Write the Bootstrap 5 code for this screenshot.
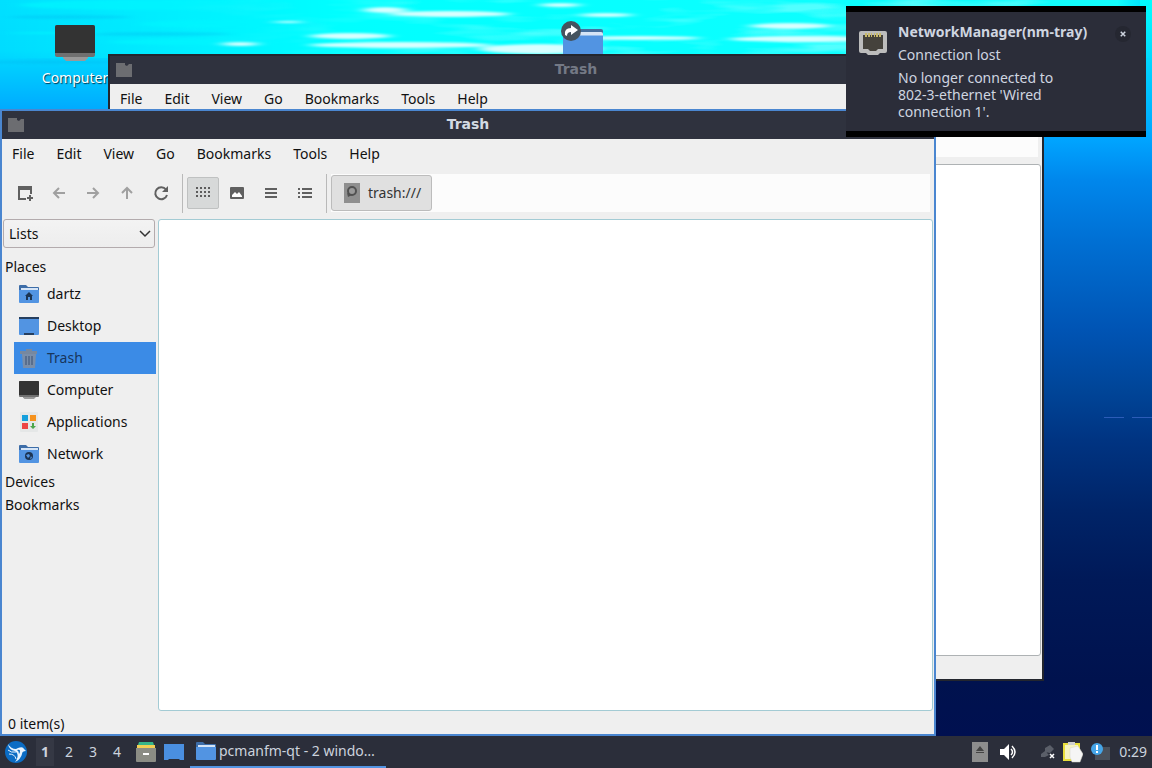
<!DOCTYPE html>
<html lang="en">
<head>
<meta charset="utf-8">
<meta name="viewport" content="width=device-width, initial-scale=1">
<title>Trash</title>
<link href="https://cdn.jsdelivr.net/npm/bootstrap@5.3.0/dist/css/bootstrap.min.css" rel="stylesheet">
<style>
  :root { --frame: #2f323e; --panel: #2b2e3a; --face: #efefef; --accent: #4a86d0; }
  body { font-family: "Noto Sans", "Open Sans", sans-serif; font-size: 14px; line-height: 20px; color: #111; }
  button, select { font: inherit; color: inherit; }
  a { color: inherit; text-decoration: none; }
  svg { display: block; flex: none; }
  .workspace { background: linear-gradient(180deg, #0ff 0, #00f4ff 20px, #00d4ff 65px, #00a4ff 140px, #0087ec 180px, #0070d4 240px, #0054b4 330px, #004598 390px, #003482 440px, #002468 510px, #001958 580px, #00124e 680px, #001050 100%); }
  .sky { height: 112px; }
  .dash { right: 0; top: 417px; width: 48px; height: 1px; background: repeating-linear-gradient(90deg, #2c5cb8 0 20px, transparent 20px 28px); }
  .shortcut { color: #fff; text-shadow: 1px 1px 1px #003a50; width: 80px; }
  .shortcut-computer { left: 35px; top: 24px; gap: 6px; }
  .shortcut-folder { left: 542px; top: 20px; }
  .win { width: 81.25%; background: var(--face); border: 2px solid #23262e; }
  .win-back { left: 108px; top: 54px; bottom: 55px; }
  .win-front { left: 0; top: 109px; bottom: 0; border-color: var(--accent); }
  .titlebar { height: 28px; background: var(--frame); color: #d3dae3; padding: 0 6px; }
  .titlebar h2 { font: bold 14px/26px "DejaVu Sans", sans-serif; margin: 0; height: 28px; }
  .win-back .titlebar { color: #747985; }
  .menus { height: 30px; padding-left: 10px; gap: 22px; }
  .menus button, .tool, .crumb, .pager button, .launch, .tray button, .shut { border: 0; background: none; padding: 0; }
  .tools { height: 50px; padding: 2px 4px 4px 7px; }
  .tool-set { gap: 2px; }
  .tool { width: 32px; height: 32px; display: grid; place-items: center; color: #606060; border-radius: 2px; }
  .tool:disabled { color: #a0a0a0; }
  .tool.active { background: #d7d9d9; border: 1px solid #bfc1c1; }
  .rule { width: 1px; height: 39px; background: #b9b9b9; margin: 0 4px 0 5px; }
  .pathbar { height: 38px; background: #fcfcfc; }
  .crumb { height: 36px; background: #e0e0e0; border: 1px solid #bcbcbc; border-radius: 3px; padding: 0 10px 0 12px; color: #333; }
  .sidebar { width: 156px; padding-left: 1px; }
  .chooser { width: 152px; height: 29px; padding: 0 5px; border: 1px solid #b3abad; border-radius: 3px; appearance: none; background: #f1f1f1 linear-gradient(#f3f3f3, #ededed); }
  .chooser-box { margin-bottom: 7px; }
  .chevron { right: 7px; top: 11px; pointer-events: none; }
  .group { font-size: 14px; line-height: 23px; padding-left: 2px; margin: 0; font-weight: 400; }
  .place { height: 32px; margin: 0 2px 0 11px; padding-left: 5px; gap: 8px; }
  .place.active { background: #3b8be6; color: #18365c; }
  .pane { background: #fff; border: 1px solid #a3cbd4; border-radius: 3px; margin-right: 1px; }
  .win-back .pane { border-color: #aeb2b4; }
  .status { height: 23px; padding-left: 6px; line-height: 26px; }
  .note { right: 6px; top: 6px; width: 300px; background: #2b2d39; border: solid #000; border-width: 6px 0; color: #cfd5e0; padding: 8px 15px 11px 13px; gap: 11px; }
  .note h3 { font-size: 14px; line-height: 23px; font-weight: 700; margin: 0; }
  .note p { margin: 0; line-height: 23px; }
  .note .detail { line-height: 17px; margin-top: 3px; width: 180px; }
  .shut { width: 16px; height: 16px; border-radius: 50%; background: #252731; margin-top: 6px; }
  .panel { height: 32px; background: var(--panel); color: #ccd3de; padding: 0 5px; }
  .pager { padding: 0 7px 0 6px; }
  .pager button { width: 24px; height: 28px; }
  .pager .active { background: #353844; font-weight: 700; background-clip: content-box; padding: 0 3px; }
  .task { width: 196px; height: 32px; border: 0; border-bottom: 2px solid #5294e2; background: none; padding: 0 5px 0 6px; margin-left: 6px; gap: 3px; }
</style>
</head>
<body class="vh-100 d-flex flex-column overflow-hidden">

<svg width="0" height="0" class="position-absolute" aria-hidden="true">
  <symbol id="i-app" viewBox="0 0 16 16"><path d="M0 1h9v2l2 1 2-2h3v13H0z" fill="#6c6d71"/></symbol>
  <symbol id="i-folder" viewBox="0 0 20 18"><path d="M0 1q0-1 1-1h6l2 2h10q1 0 1 1v4H0z" fill="#3d6da8"/><path d="M2 3h17v4H2z" fill="#d5e4f6"/><path d="M0 5h20v12q0 1-1 1H1q-1 0-1-1z" fill="#5294e2"/></symbol>
  <symbol id="i-monitor" viewBox="0 0 40 36"><path d="M8 31h25v2l-3 3H11l-3-3z" fill="#999"/><rect width="40" height="32" rx="2" fill="#707070"/><path d="M0 28V2q0-2 2-2h36q2 0 2 2v26z" fill="#333"/></symbol>
</svg>

<main class="workspace position-relative flex-grow-1 overflow-hidden">
  <svg class="sky position-absolute w-100" viewBox="0 0 1152 112" preserveAspectRatio="none" aria-hidden="true">
    <defs>
      <linearGradient id="sea" x2="0" y2="1"><stop stop-color="#00e0ff"/><stop offset=".45" stop-color="#00dcff"/><stop offset="1" stop-color="#00a8ff"/></linearGradient>
      <linearGradient id="glow"><stop offset="0" stop-color="#00ffff" stop-opacity="0"/><stop offset=".3" stop-color="#00ffff"/><stop offset=".97" stop-color="#14ffff"/><stop offset="1" stop-color="#00f0ff" stop-opacity="0"/></linearGradient>
      <filter id="soft" x="-20%" y="-100%" width="140%" height="300%"><feGaussianBlur stdDeviation="7 1"/></filter>
      <filter id="ripple" x="0" y="0" width="100%" height="100%"><feTurbulence type="fractalNoise" baseFrequency=".009 .07" numOctaves="3" seed="7"/><feColorMatrix values="0 0 0 0 .65  0 0 0 0 1  0 0 0 0 1  3.4 0 0 0 -1.65"/></filter>
      <linearGradient id="fade"><stop offset=".15" stop-color="#000"/><stop offset=".5" stop-color="#fff"/></linearGradient>
      <mask id="m"><rect width="1152" height="112" fill="url(#fade)"/></mask>
    </defs>
    <rect width="1140" height="112" fill="url(#sea)"/>
    <rect width="1152" height="58" fill="url(#glow)"/>
    <g filter="url(#soft)" fill="#00f6ff" opacity=".7"><ellipse cx="150" cy="5" rx="130" ry="5"/><ellipse cx="230" cy="24" rx="90" ry="4"/><ellipse cx="190" cy="42" rx="80" ry="3"/><ellipse cx="60" cy="33" rx="50" ry="1"/></g>
    <g filter="url(#soft)" fill="#00b4ee" opacity=".3"><ellipse cx="70" cy="17" rx="60" ry="2"/><ellipse cx="160" cy="34" rx="70" ry="2"/><ellipse cx="50" cy="62" rx="70" ry="2"/></g>
    <g mask="url(#m)"><rect width="1145" height="56" filter="url(#ripple)" opacity=".35"/></g>
    <g filter="url(#soft)" fill="#d8ffff"><ellipse cx="385" cy="10" rx="22" ry="3"/><ellipse cx="450" cy="14" rx="60" ry="3"/><ellipse cx="560" cy="5" rx="20" ry="2"/><ellipse cx="606" cy="15" rx="26" ry="2"/><ellipse cx="288" cy="22" rx="14" ry="1"/><ellipse cx="350" cy="36" rx="40" ry="3"/><ellipse cx="240" cy="44" rx="18" ry="2"/><ellipse cx="400" cy="45" rx="90" ry="3"/><ellipse cx="540" cy="49" rx="60" ry="5"/><ellipse cx="640" cy="38" rx="60" ry="2"/><ellipse cx="790" cy="26" rx="40" ry="3"/><ellipse cx="800" cy="39" rx="70" ry="3"/></g>
  </svg>
  <div class="dash position-absolute"></div>

  <a href="#" class="shortcut shortcut-computer position-absolute d-flex flex-column align-items-center">
    <svg width="40" height="38"><use href="#i-monitor"/></svg>
    <span>Computer</span>
  </a>
  <a href="#" class="shortcut shortcut-folder position-absolute d-flex justify-content-center" aria-label="Folder link">
    <svg width="44" height="44" viewBox="0 0 44 44"><path d="M3 9h38q2 0 2 2v30H3z" fill="#456f9f"/><path d="M6 12h35q2 0 2 2v6H6z" fill="#d5e4f6"/><path d="M3 15.500h40V44H3z" fill="#5294e2"/><circle cx="11" cy="11" r="10" fill="#45535e"/><path d="M5 15q-1-7 6-7V5l7 5-7 5v-3q-4 0-4 4z" fill="#fff"/></svg>
  </a>

  <section class="win win-back position-absolute d-flex flex-column">
    <header class="titlebar d-flex align-items-center">
      <svg width="16" height="16"><use href="#i-app"/></svg><h2 class="flex-grow-1 text-center pe-3">Trash</h2>
    </header>
    <nav class="menus d-flex"><button>File</button><button>Edit</button><button>View</button><button>Go</button><button>Bookmarks</button><button>Tools</button><button>Help</button></nav>
    <div class="tools d-flex align-items-center"><div class="pathbar flex-grow-1"></div></div>
    <div class="pane flex-grow-1"></div>
    <div class="status"></div>
  </section>

  <section class="win win-front position-absolute d-flex flex-column">
    <header class="titlebar d-flex align-items-center">
      <svg width="16" height="16"><use href="#i-app"/></svg><h2 class="flex-grow-1 text-center pe-3">Trash</h2>
    </header>
    <nav class="menus d-flex"><button>File</button><button>Edit</button><button>View</button><button>Go</button><button>Bookmarks</button><button>Tools</button><button>Help</button></nav>
    <div class="tools d-flex align-items-center">
      <div class="tool-set d-flex">
        <button class="tool" aria-label="New window"><svg width="16" height="16" viewBox="0 0 16 16" fill="currentColor"><path d="M1 1h14v8h-2V5H3v8h6v2H1zM12 10h2v2h2v2h-2v2h-2v-2h-2v-2h2z"/></svg></button>
        <button class="tool" disabled aria-label="Back"><svg width="16" height="16" viewBox="0 0 16 16" fill="none" stroke="currentColor" stroke-width="2"><path d="M14 8H3M8 3L3 8l5 5"/></svg></button>
        <button class="tool" disabled aria-label="Forward"><svg width="16" height="16" viewBox="0 0 16 16" fill="none" stroke="currentColor" stroke-width="2"><path d="M2 8h11M8 3l5 5-5 5"/></svg></button>
        <button class="tool" disabled aria-label="Up"><svg width="16" height="16" viewBox="0 0 16 16" fill="none" stroke="currentColor" stroke-width="2"><path d="M8 14V3M3 8l5-5 5 5"/></svg></button>
        <button class="tool" aria-label="Reload"><svg width="16" height="16" viewBox="0 0 16 16" fill="none" stroke="currentColor" stroke-width="2"><path d="M13 4.500A6 6 0 1 0 14 10"/><path d="M15 1v6H9z" fill="currentColor" stroke="none"/></svg></button>
      </div>
      <div class="rule"></div>
      <div class="tool-set d-flex">
        <button class="tool active" aria-label="Icon view"><svg width="16" height="12" viewBox="0 0 16 12" stroke="#5c5c5c" stroke-width="2" stroke-dasharray="2 2"><path d="M1 1h14M1 5h14M1 9h14"/></svg></button>
        <button class="tool" aria-label="Thumbnail view"><svg width="14" height="12" viewBox="0 0 14 12"><rect width="14" height="12" rx="1" fill="currentColor"/><path d="M2 10V8l3-3 2 2 2-2 3 4v1z" fill="#fff"/></svg></button>
        <button class="tool" aria-label="Compact view"><svg width="12" height="10" viewBox="0 0 12 10" stroke="currentColor" stroke-width="2"><path d="M0 1h12M0 5h12M0 9h12"/></svg></button>
        <button class="tool" aria-label="Detailed list"><svg width="14" height="10" viewBox="0 0 14 10" stroke="currentColor" stroke-width="2"><path d="M0 1h2M0 5h2M0 9h2M4 1h10M4 5h10M4 9h10"/></svg></button>
      </div>
      <div class="rule"></div>
      <div class="pathbar flex-grow-1 d-flex align-items-center">
        <button class="crumb d-flex align-items-center gap-2"><svg width="16" height="20" viewBox="0 0 16 20"><path d="M0 0h16v20H0z" fill="#8f8f8f"/><circle cx="8" cy="8" r="4" fill="#999" stroke="#515151" stroke-width="2"/><path d="M3 10l1 4 4-2z" fill="#515151"/></svg>trash:///</button>
      </div>
    </div>

    <div class="flex-grow-1 d-flex">
      <aside class="sidebar d-flex flex-column flex-shrink-0">
        <div class="chooser-box position-relative d-flex">
          <select class="chooser" aria-label="Side pane mode"><option>Lists</option></select>
          <svg class="chevron position-absolute" width="12" height="8" viewBox="0 0 12 8" fill="none" stroke="#333" stroke-width="1.500"><path d="M1 1l5 5 5-5"/></svg>
        </div>
        <h3 class="group">Places</h3>
        <a href="#" class="place d-flex align-items-center"><svg width="20" height="18"><use href="#i-folder"/><path d="M10 7l4 4h-1v4h-2v-3H9v3H7v-4H6z" fill="#1c3452"/></svg>dartz</a>
        <a href="#" class="place d-flex align-items-center"><svg width="20" height="18" viewBox="0 0 20 18"><path d="M0 0h20v17q0 1-1 1H1q-1 0-1-1z" fill="#5294e2"/><path d="M0 0h20v2H0zM5 16h10v2H5z" fill="#263f5f"/></svg>Desktop</a>
        <a href="#" class="place active d-flex align-items-center"><svg width="20" height="20" viewBox="0 0 20 20"><path d="M1 3h6V1h6v2h5v3H1z" fill="#77889f"/><path d="M3 6h14l-1 14H4z" fill="#7a8ea9"/><path d="M7 8v9M10 8v9M13 8v9" stroke="#4f6484" stroke-width="1.500"/></svg>Trash</a>
        <a href="#" class="place d-flex align-items-center"><svg width="20" height="18"><use href="#i-monitor"/></svg>Computer</a>
        <a href="#" class="place d-flex align-items-center"><svg width="20" height="20" viewBox="0 0 20 20"><rect x="1" width="18" height="20" rx="1" fill="#e5e7e7"/><path d="M3 3h6v6H3z" fill="#16a0dd"/><path d="M11 3h6v6h-6z" fill="#f5921e"/><path d="M3 11h6v6H3z" fill="#ed4545"/><path d="M13 11h2v3h2l-3 3-3-3h2z" fill="#4ca64c"/></svg>Applications</a>
        <a href="#" class="place d-flex align-items-center"><svg width="20" height="18"><use href="#i-folder"/><circle cx="10" cy="11" r="4" fill="#1c3452"/><path d="M7 10l3-1 1 2-2 2zM12 11l1 2-2 1z" fill="#5294e2"/></svg>Network</a>
        <h3 class="group">Devices</h3>
        <h3 class="group">Bookmarks</h3>
      </aside>
      <div class="pane flex-grow-1"></div>
    </div>
    <div class="status">0 item(s)</div>
  </section>

  <aside class="note position-absolute d-flex align-items-start">
    <svg class="mt-2" width="28" height="28" viewBox="0 0 28 28"><path d="M2 3h24q2 0 2 2v18q0 2-2 2h-5l-2 2H9l-2-2H2q-2 0-2-2V5q0-2 2-2z" fill="#bcbcbc"/><path d="M4 7h20v14h-5l-2 2h-6l-2-2H4z" fill="#45423c"/><path d="M6 5h2v4H6zm3 0h2v4H9zm3 0h1v4h-1zm3 0h1v4h-1zm2 0h2v4h-2zm3 0h2v4h-2z" fill="#c9b96a"/></svg>
    <div class="flex-grow-1">
      <h3 class="text-nowrap">NetworkManager(nm-tray)</h3>
      <p>Connection lost</p>
      <p class="detail">No longer connected to 802-3-ethernet 'Wired connection 1'.</p>
    </div>
    <button class="shut d-grid align-items-center justify-content-center" aria-label="Close"><svg width="6" height="6" viewBox="0 0 8 8" stroke="#cfd5e0" stroke-width="2"><path d="M1 1l6 6M7 1L1 7"/></svg></button>
  </aside>
</main>

<footer class="panel d-flex align-items-center">
  <button class="launch" aria-label="Menu"><svg width="22" height="22" viewBox="0 0 22 22"><circle cx="11" cy="11" r="11" fill="#0b6cc4"/><path d="M3 3q3 5 8 5l2-1q5-2 6 1l2 2q-4 0-4 3-1 5-7 8 4-5 2-9l-2-2Q4 9 3 3z" fill="#e8f4ff"/><path d="M12 9q3-1 3 1 0 2-1 3 0-3-2-4z" fill="#0b6cc4"/><path d="M3 9q3 3 8 2M4 13q6 0 7 5" fill="none" stroke="#e8f4ff"/></svg></button>
  <div class="pager d-flex"><button class="active">1</button><button>2</button><button>3</button><button>4</button></div>
  <button class="launch me-2" aria-label="Files"><svg width="20" height="22" viewBox="0 0 20 22"><path d="M3 1h14l1 3H2z" fill="#36b58a"/><path d="M1 4h18v3H1z" fill="#f2cf54"/><path d="M0 7h20v13q0 1-1 1H1q-1 0-1-1z" fill="#8b8c84"/><path d="M7 12h6v2H7z" fill="#fff"/></svg></button>
  <button class="launch" aria-label="Show desktop"><svg width="20" height="16" viewBox="0 0 20 16"><path d="M0 0h20v16h-4l-1-1H5l-1 1H0z" fill="#4a8fe0"/></svg></button>
  <button class="task d-flex align-items-center"><svg width="20" height="18"><use href="#i-folder"/></svg><span class="text-truncate">pcmanfm-qt - 2 windo…</span></button>
  <div class="tray d-flex align-items-center ms-auto">
    <button aria-label="Removable media"><svg width="16" height="20" viewBox="0 0 16 20"><path d="M0 0h16v20H0z" fill="#8d8d8d"/><path d="M8 4l4 5H4zM4 10h8v1H4z" fill="#444"/></svg></button>
    <button class="ms-2 ps-1 me-4" aria-label="Volume"><svg width="17" height="16" viewBox="0 0 17 16"><path d="M0 5h4l5-5v16l-5-5H0z" fill="#fff"/><path d="M11 5q3 3 0 6M12 2q6 6 0 12" fill="none" stroke="#fff" stroke-width="1.500"/></svg></button>
    <button class="me-2" aria-label="Network"><svg width="14" height="16" viewBox="0 0 14 16"><path d="M4 4l5-3 4 4-4 4-5-1zM0 10l4-3 4 4-4 2H0z" fill="#5b5f69"/><path d="M9 10l4 4M13 10l-4 4" stroke="#fff" stroke-width="1.500"/></svg></button>
    <button class="me-2" aria-label="Clipboard"><svg width="20" height="22" viewBox="0 0 20 22"><path d="M0 2h17v18H0z" fill="#e9df3c"/><path d="M2 4h13v14H2z" fill="#f6f4c0"/><path d="M5 1h7v3H5z" fill="#d0d0d0"/><path d="M7 7l8-2 5 8-3 8H9l-2-5z" fill="#f5f5f5" stroke="#d4d4c8" stroke-width=".5"/></svg></button>
    <button class="me-2" aria-label="Notifications"><svg width="20" height="18" viewBox="0 0 20 18"><path d="M4 4h15v13H4z" fill="#4a505a"/><circle cx="6" cy="6" r="6" fill="#45a5e8"/><path d="M5 2h2v5H5zM5 8h2v2H5z" fill="#fff"/></svg></button>
    <span>0:29</span>
  </div>
</footer>
<script src="https://cdn.jsdelivr.net/npm/bootstrap@5.3.0/dist/js/bootstrap.bundle.min.js"></script>
</body>
</html>
